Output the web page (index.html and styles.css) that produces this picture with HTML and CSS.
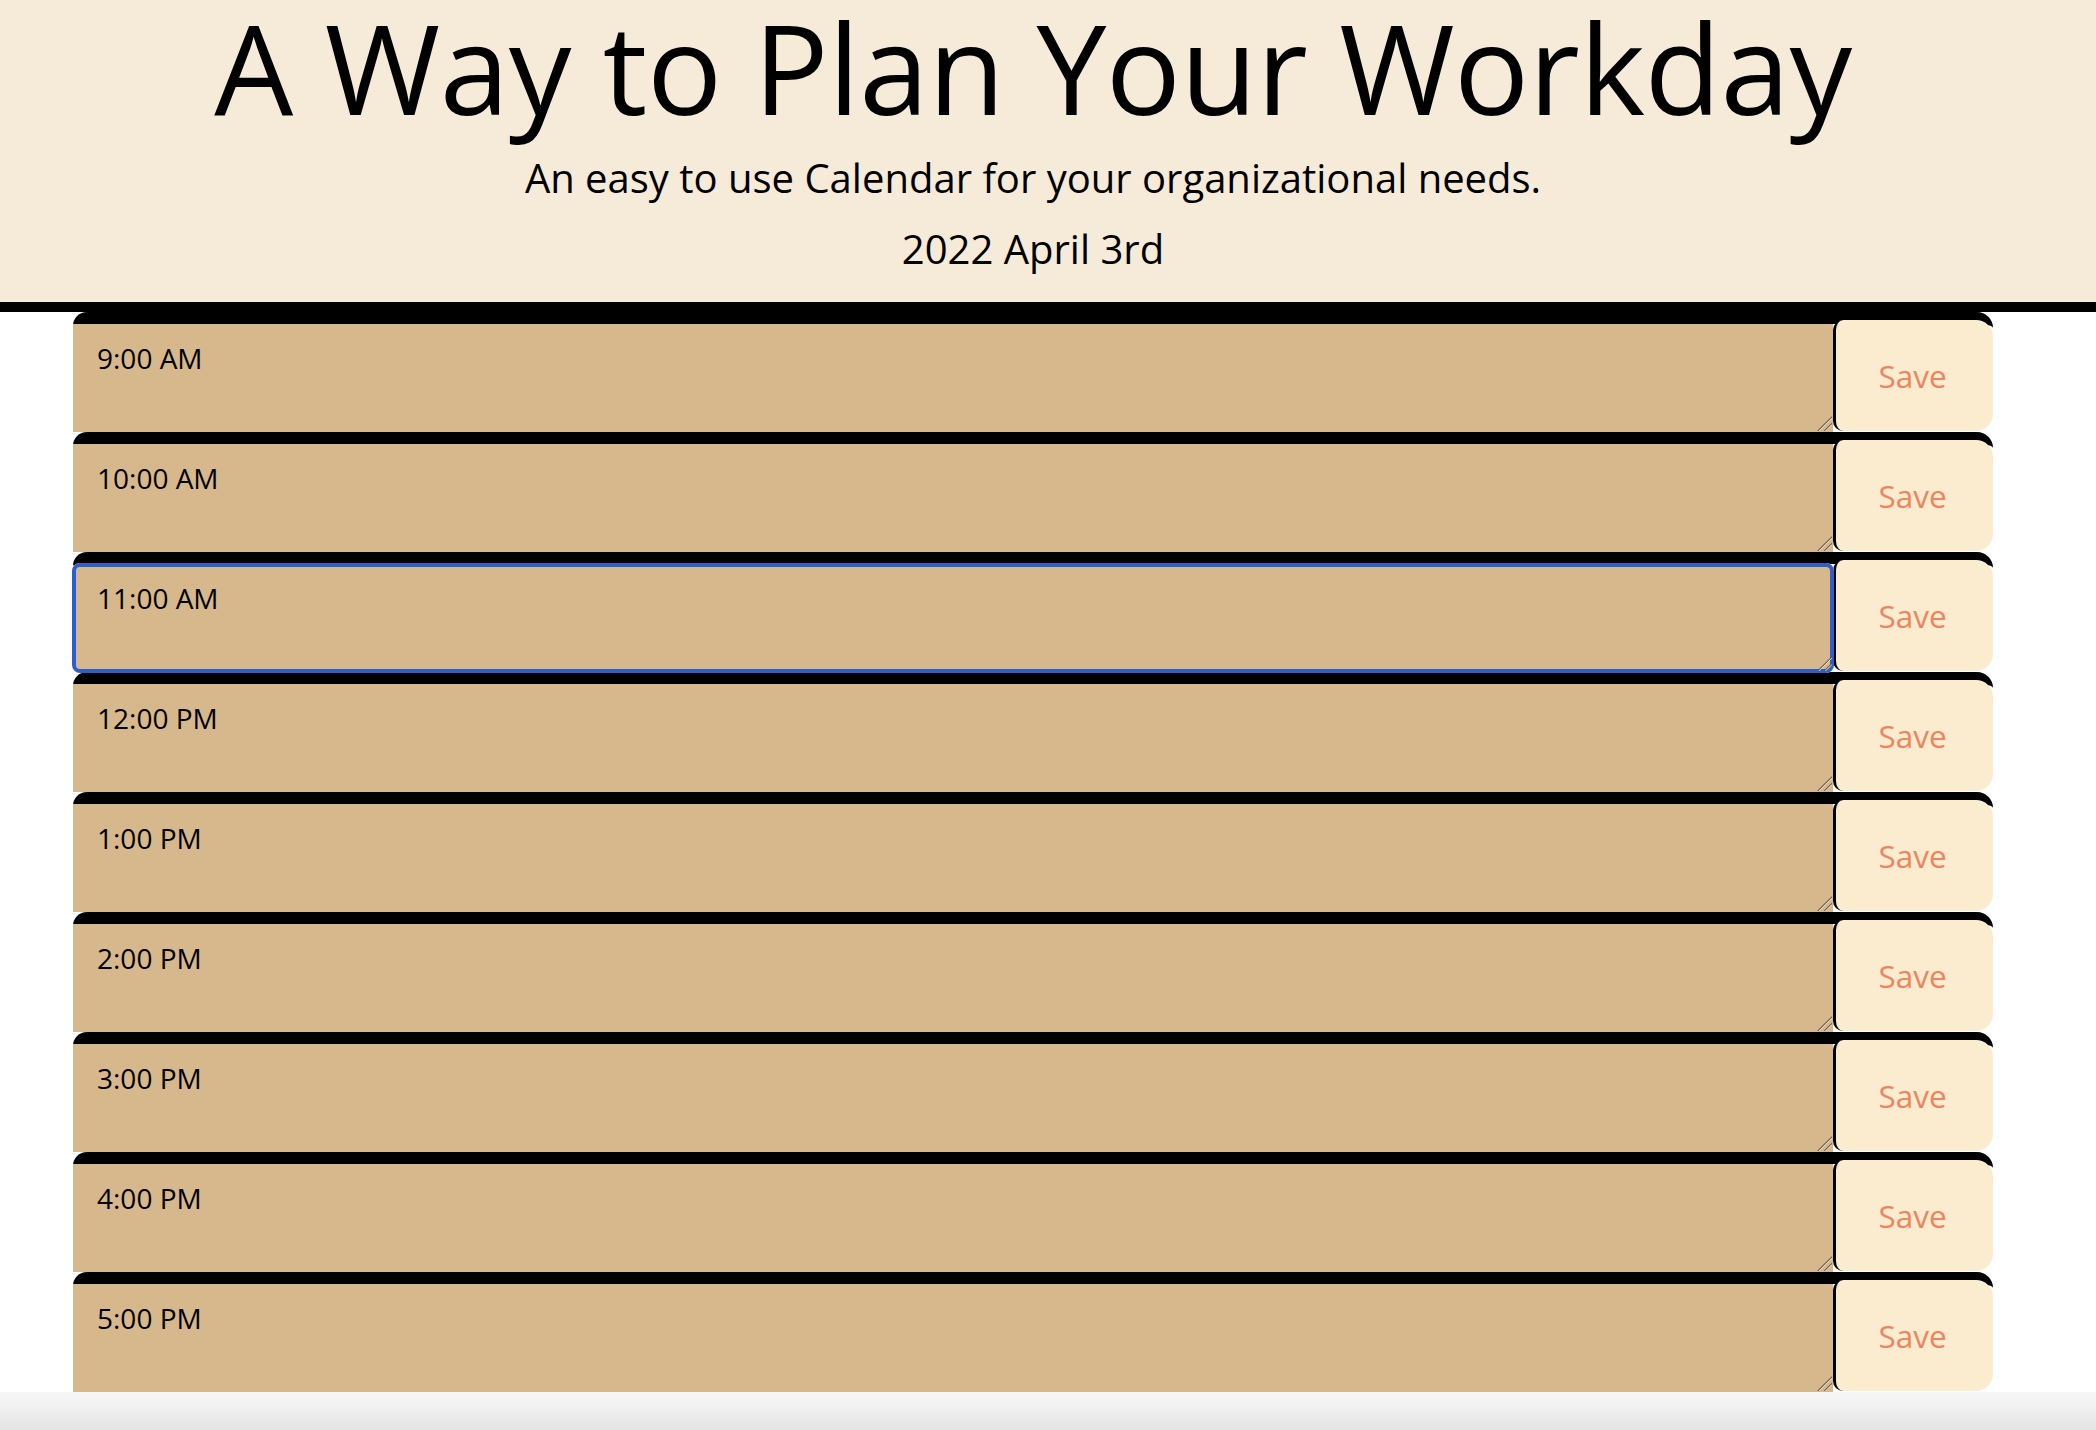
FILE: index.html
```html
<!DOCTYPE html>
<html lang="en">
<head>
<meta charset="utf-8">
<title>Work Day Scheduler</title>
<link rel="stylesheet" href="styles.css">
</head>
<body>
<header class="jumbotron">
  <h1 class="title">A Way to Plan Your Workday</h1>
  <p class="lead">An easy to use Calendar for your organizational needs.</p>
  <p class="current-day">2022 April 3rd</p>
</header>
<main class="container">
  <div class="row"><div class="field"><textarea class="description">9:00 AM</textarea><svg class="grip" viewBox="0 0 16 16"><path d="M1 16 16 1M8 16 16 8" class="grip-dark"/><path d="M2 16 16 2M9 16 16 9" class="grip-light"/></svg></div><button class="save-btn">Save</button></div>
  <div class="row"><div class="field"><textarea class="description">10:00 AM</textarea><svg class="grip" viewBox="0 0 16 16"><path d="M1 16 16 1M8 16 16 8" class="grip-dark"/><path d="M2 16 16 2M9 16 16 9" class="grip-light"/></svg></div><button class="save-btn">Save</button></div>
  <div class="row"><div class="field"><textarea class="description is-focused">11:00 AM</textarea><svg class="grip" viewBox="0 0 16 16"><path d="M1 16 16 1M8 16 16 8" class="grip-dark"/><path d="M2 16 16 2M9 16 16 9" class="grip-light"/></svg></div><button class="save-btn">Save</button></div>
  <div class="row"><div class="field"><textarea class="description">12:00 PM</textarea><svg class="grip" viewBox="0 0 16 16"><path d="M1 16 16 1M8 16 16 8" class="grip-dark"/><path d="M2 16 16 2M9 16 16 9" class="grip-light"/></svg></div><button class="save-btn">Save</button></div>
  <div class="row"><div class="field"><textarea class="description">1:00 PM</textarea><svg class="grip" viewBox="0 0 16 16"><path d="M1 16 16 1M8 16 16 8" class="grip-dark"/><path d="M2 16 16 2M9 16 16 9" class="grip-light"/></svg></div><button class="save-btn">Save</button></div>
  <div class="row"><div class="field"><textarea class="description">2:00 PM</textarea><svg class="grip" viewBox="0 0 16 16"><path d="M1 16 16 1M8 16 16 8" class="grip-dark"/><path d="M2 16 16 2M9 16 16 9" class="grip-light"/></svg></div><button class="save-btn">Save</button></div>
  <div class="row"><div class="field"><textarea class="description">3:00 PM</textarea><svg class="grip" viewBox="0 0 16 16"><path d="M1 16 16 1M8 16 16 8" class="grip-dark"/><path d="M2 16 16 2M9 16 16 9" class="grip-light"/></svg></div><button class="save-btn">Save</button></div>
  <div class="row"><div class="field"><textarea class="description">4:00 PM</textarea><svg class="grip" viewBox="0 0 16 16"><path d="M1 16 16 1M8 16 16 8" class="grip-dark"/><path d="M2 16 16 2M9 16 16 9" class="grip-light"/></svg></div><button class="save-btn">Save</button></div>
  <div class="row"><div class="field"><textarea class="description">5:00 PM</textarea><svg class="grip" viewBox="0 0 16 16"><path d="M1 16 16 1M8 16 16 8" class="grip-dark"/><path d="M2 16 16 2M9 16 16 9" class="grip-light"/></svg></div><button class="save-btn">Save</button></div>
</main>
<div class="page-end"></div>
</body>
</html>
```
FILE: styles.css
```css
html, body {
  margin: 0;
  padding: 0;
  background: #ffffff;
}

body {
  font-family: "Open Sans", "Noto Sans", sans-serif;
  color: #000000;
}

.jumbotron {
  box-sizing: border-box;
  background: #f6ebd9;
  border-bottom: 10px solid #000000;
  padding: 0 30px 0 0;
  height: 312px;
  text-align: center;
}

.title {
  margin: 0;
  padding-bottom: 14px;
  font-size: 125px;
  font-weight: 400;
  line-height: 134px;
  letter-spacing: -0.5px;
}

.lead {
  margin: 10px 0 0;
  font-size: 40px;
  line-height: 40px;
}

.current-day {
  margin: 31px 0 0;
  font-size: 40px;
  line-height: 40px;
}

.container {
  width: 1920px;
  margin: 0 0 0 73px;
}

.row {
  display: flex;
  height: 108px;
  border-top: 12px solid #000000;
  border-radius: 14px 16px 0 0;
  background: #ffffff;
}

.field {
  position: relative;
  flex: 1;
  display: flex;
}

.description {
  flex: 1;
  margin: 0;
  border: none;
  border-radius: 0;
  background: #d7b88d;
  padding: 15px 24px;
  font-family: "Open Sans", "Noto Sans", sans-serif;
  font-size: 28px;
  color: #000000;
  resize: none;
  outline: none;
}

.description.is-focused {
  outline: 4px solid #2d5fcb;
  outline-offset: -3px;
  border-radius: 7px;
  box-shadow: 0 0 0 1px #ffffff;
}

.grip {
  position: absolute;
  right: 1px;
  bottom: 1px;
  width: 15px;
  height: 15px;
  pointer-events: none;
}

.grip-dark {
  fill: none;
  stroke: #5a5047;
  stroke-width: 1.3;
}

.grip-light {
  fill: none;
  stroke: #f3ece2;
  stroke-width: 1;
}

.save-btn {
  width: 160px;
  margin: -4px 0 1px;
  border: none;
  border-left: 3px solid #000000;
  border-radius: 10px 17px 17px 10px;
  background: #fbecd0;
  color: #f0845c;
  font-family: "Open Sans", "Noto Sans", sans-serif;
  font-size: 31.5px;
  padding: 0 4px 0 0;
  cursor: pointer;
}

.page-end {
  height: 38px;
  background: linear-gradient(#f8f8f8, #e4e4e4);
}
```
